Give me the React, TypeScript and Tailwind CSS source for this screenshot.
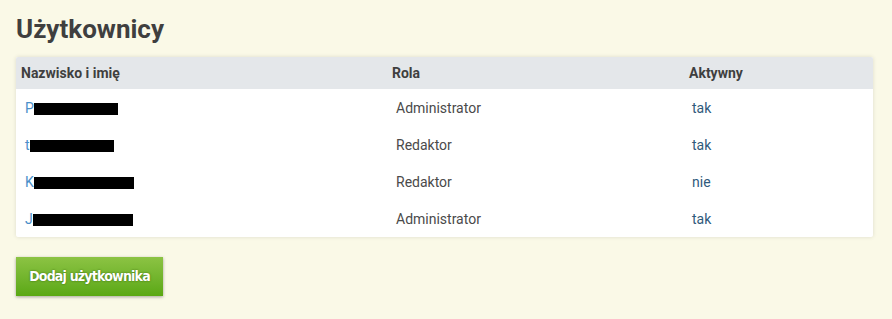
import React from "react";

const users = [
  { initial: "P", redact: 84, role: "Administrator", active: "tak" },
  { initial: "t", redact: 84, role: "Redaktor", active: "tak" },
  { initial: "K", redact: 100, role: "Redaktor", active: "nie" },
  { initial: "J", redact: 100, role: "Administrator", active: "tak" },
];

const App = () => {
  return (
    <div
      className="min-h-[319px] bg-[#faf9e7] px-4 pt-[14px] pb-6"
      style={{ fontFamily: "Roboto, 'Liberation Sans', sans-serif" }}
    >
      <h1 className="text-[26px] font-bold leading-[30px] text-[#3f3f3f]">
        Użytkownicy
      </h1>

      <div className="mt-[13px] w-[857px] overflow-hidden rounded-[2px] bg-white shadow-[0_0_4px_rgba(0,0,0,0.12)]">
        <table className="w-full border-collapse text-left text-sm">
          <thead>
            <tr className="h-8 bg-[#e4e7ea] text-[#3f3f3f]">
              <th className="w-[371px] px-[5px] font-bold">Nazwisko i imię</th>
              <th className="w-[297px] px-[5px] font-bold">Rola</th>
              <th className="px-[5px] font-bold">Aktywny</th>
            </tr>
          </thead>
          <tbody>
            {users.map((u, i) => (
              <tr key={i} className="h-[37px]">
                <td className="px-[9px]">
                  <span className="flex items-center text-[#4a8fc9]">
                    {u.initial}
                    <span
                      className="mt-[2px] inline-block h-3 bg-black"
                      style={{ width: u.redact }}
                    />
                  </span>
                </td>
                <td className="px-[9px] text-[#4a4a4a]">{u.role}</td>
                <td className="px-[8px] text-[#2f5a7c]">{u.active}</td>
              </tr>
            ))}
          </tbody>
        </table>
      </div>

      <button
        className="mt-5 h-[39px] w-[147px] bg-gradient-to-b from-[#8cc343] to-[#5aa811] text-[14px] font-bold tracking-[-0.8px] text-white shadow-[0_1px_3px_rgba(0,0,0,0.35)] [text-shadow:0_0_2px_rgba(40,80,0,0.8)]"
        style={{ fontFamily: "Tahoma, 'DejaVu Sans Condensed', 'DejaVu Sans', sans-serif" }}
      >
        Dodaj użytkownika
      </button>
    </div>
  );
};

export default App;
